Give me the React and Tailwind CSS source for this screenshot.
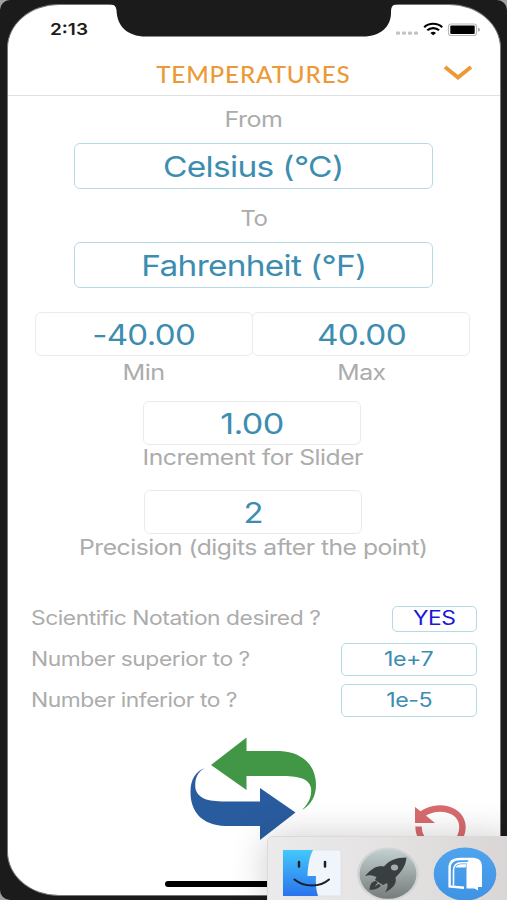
import React from "react";

function Stretch({ children, className = "" }) {
  return <span className={`inline-block whitespace-nowrap ${className}`}>{children}</span>;
}

function Caption({ children, className = "" }) {
  return (
    <div className="flex h-6 items-center justify-center text-[21px] leading-6 tracking-[-0.02em] text-[#acacac]">
      <Stretch className={className}>{children}</Stretch>
    </div>
  );
}

function UnitBox({ children, className = "" }) {
  return (
    <div className="flex h-[46px] w-[359px] items-center justify-center rounded-[6px] border-[1.5px] border-[#b5dae4] text-[29px] leading-none tracking-[-0.02em] text-[#3c8db0]">
      <Stretch className={className}>{children}</Stretch>
    </div>
  );
}

function NumberBox({ children, className = "" }) {
  return (
    <div className="flex h-[44px] w-[218px] shrink-0 items-center justify-center rounded-[6px] border-[1.5px] border-[#ebebeb] pt-[1px] text-[28px] leading-none tracking-[-0.02em] text-[#3c8db0]">
      <Stretch className={className}>{children}</Stretch>
    </div>
  );
}

function Row({ label, labelClass, value, valueClass, boxClass }) {
  return (
    <div className="flex h-[33px] items-center justify-between pl-[23px] pr-[23px]">
      <Stretch className={`origin-left text-[19.5px] leading-none tracking-[-0.02em] text-[#acacac] ${labelClass}`}>{label}</Stretch>
      <div className={`flex items-center justify-center rounded-[5px] border-[1.5px] border-[#b5dae4] text-[19.5px] leading-none tracking-[-0.02em] ${boxClass}`}>
        <Stretch className={valueClass}>{value}</Stretch>
      </div>
    </div>
  );
}

function StatusIcons() {
  return (
    <svg width="88" height="16" viewBox="0 0 88 16" className="block">
      <g fill="#c4c4c4">
        <rect x="1" y="9.500" width="4" height="3.200" rx="1" />
        <rect x="7" y="9.500" width="4" height="3.200" rx="1" />
        <rect x="13" y="9.500" width="4" height="3.200" rx="1" />
        <rect x="19" y="9.500" width="4" height="3.200" rx="1" />
      </g>
      <g fill="none" stroke="#000" strokeWidth="2.200">
        <path d="M29.200 5.200C34 .6 42.400 .6 47.200 5.200" />
        <path d="M32.300 8.300C35.500 5.300 40.900 5.300 44.100 8.300" />
      </g>
      <path d="M35.400 10.900Q38.200 8.700 41 10.900L38.200 13.200Z" fill="#000" />
      <rect x="53.500" y="2" width="28" height="11.500" rx="2.500" fill="#fff" stroke="#b9b9b9" strokeWidth="1.200" />
      <rect x="55.300" y="3.600" width="24.400" height="8.300" rx="1" fill="#000" />
      <path d="M83 5.700Q85 6.200 85 7.700Q85 9.200 83 9.800Z" fill="#aaa" />
    </svg>
  );
}

function Finder() {
  return (
    <svg width="60" height="48" viewBox="0 0 60 48" className="block">
      <defs>
        <linearGradient id="finderBlue" x1="0" y1="0" x2="0" y2="1">
          <stop offset="0" stopColor="#43c8fb" />
          <stop offset="1" stopColor="#2b73ed" />
        </linearGradient>
      </defs>
      <rect x="1" y="1" width="58" height="46" rx="2" fill="#f0f4fb" stroke="#dadfe6" strokeWidth=".8" />
      <path d="M1 1H31C27 9 26 17 25.500 27H34C33.500 34 34 41 36 47H1Z" fill="url(#finderBlue)" />
      <path d="M17 13V17.500M43 13V17.500" stroke="#15202f" strokeWidth="2.500" strokeLinecap="round" />
      <path d="M12.500 30.500C22 38.500 38 38.500 47 30.500" fill="none" stroke="#15202f" strokeWidth="2" strokeLinecap="round" />
    </svg>
  );
}

function Rocket() {
  return (
    <svg width="64" height="54" viewBox="0 0 64 54" className="block">
      <defs>
        <linearGradient id="rocketDisc" x1="0" y1="0" x2="0" y2="1">
          <stop offset="0" stopColor="#c2d0cf" />
          <stop offset="1" stopColor="#767c7b" />
        </linearGradient>
      </defs>
      <ellipse cx="32" cy="27" rx="31" ry="26.500" fill="#d0d6d5" />
      <ellipse cx="32" cy="27" rx="28.500" ry="24.800" fill="url(#rocketDisc)" />
      <path d="M50.500 10.500C40 10.500 33 13.500 28 19.500C22 18.500 17 20 9 29Q15 27 20.500 30L19 33L27 38L31 36C32.500 39 31 42 29 45.500C37 41 41 37 39.500 30.500C45.500 25 50 18 50.500 10.500Z" fill="#393e40" />
      <path d="M20 34C15 34.500 14 38 13.500 43C18 42.500 22 42.500 25 38.500L22.500 37L18.500 40L21.500 35.500Z" fill="#393e40" />
      <ellipse cx="38.500" cy="20.500" rx="3.600" ry="2.900" fill="#a2aead" />
    </svg>
  );
}

function Mailbox() {
  return (
    <svg width="64" height="54" viewBox="0 0 64 54" className="block">
      <defs>
        <linearGradient id="mailDisc" x1="0" y1="0" x2="0" y2="1">
          <stop offset="0" stopColor="#4fa3ee" />
          <stop offset="1" stopColor="#3f93e4" />
        </linearGradient>
      </defs>
      <ellipse cx="32" cy="27" rx="31.300" ry="26.500" fill="url(#mailDisc)" />
      <path d="M41 12H27C19.500 12 16.600 15.500 16.600 21V39.500L31 40.800" fill="none" stroke="#fff" strokeWidth="2.400" />
      <path d="M20.500 38.500V24C20.500 18.500 23.500 15.800 28.500 15.800H34.500" fill="none" stroke="#fff" strokeWidth="1.600" />
      <path d="M22.500 20.500C23.500 18 25.500 17.200 28 17.200H33.500L32.500 20.500Z" fill="#fff" />
      <path d="M33.500 41.500V20C33.500 14.500 36 11 41 11C46.500 11 49 14.500 49 20V40H45V43.500L41.500 41.500Z" fill="#fff" />
    </svg>
  );
}

function Dock() {
  return (
    <div className="absolute left-[267px] top-[836px] flex h-[70px] w-[250px] items-start rounded-tl-[5px] border border-[#dbd9d9] bg-gradient-to-r from-[#ebebeb] via-[#e4e1e1] to-[#d9d5d5] pl-[14px] pt-[10px] shadow-[0_0_36px_rgba(0,0,0,0.2)]">
      <div className="pt-[2px]"><Finder /></div>
      <div className="ml-[14px]"><Rocket /></div>
      <div className="ml-[13px]"><Mailbox /></div>
    </div>
  );
}

export default function App() {
  return (
    <div className="relative h-[900px] w-[507px] overflow-hidden bg-[#a0a0a0] font-['Inter','Liberation_Sans',sans-serif]">
      <div className="h-[900px] w-[507px] rounded-[10px] bg-[#1b1b1b] px-[7px] pt-[4px]">
        <div className="flex h-[892px] w-[494px] flex-col overflow-hidden rounded-[52px/44px] border border-[#777] bg-white">
          <div className="flex h-[49px] items-center justify-between pl-[42px] pr-[17px]">
            <Stretch className="origin-left scale-x-[1.150] text-[16.5px] font-semibold leading-none text-[#1c1c1c]">2:13</Stretch>
            <StatusIcons />
          </div>
          <div className="relative flex h-[42px] shrink-0 items-center justify-center border-b border-[#e0e0e0] pr-[2px]">
            <Stretch className="scale-x-[1.030] font-['Lato',sans-serif] text-[23.5px] font-medium leading-none tracking-[0.035em] text-[#ec9a37]">TEMPERATURES</Stretch>
            <svg width="30" height="18" viewBox="0 0 30 18" className="absolute right-[27px] top-[10px]">
              <path d="M2 3L15 13.500L28 3" fill="none" stroke="#ec9a37" strokeWidth="4" />
            </svg>
          </div>
          <div className="flex flex-col items-center pr-[1px] pt-[12px]">
            <Caption className="scale-x-[1.190]">From</Caption>
            <div className="mt-[11px]"><UnitBox className="scale-x-[1.155]">Celsius (°C)</UnitBox></div>
            <div className="mt-[18px]"><Caption className="scale-x-[1.150]">To</Caption></div>
            <div className="mt-[11px]"><UnitBox className="scale-x-[1.150]">Fahrenheit (°F)</UnitBox></div>
            <div className="mt-[24px] flex pr-[2px]">
              <div>
                <NumberBox className="scale-x-[1.180]">-40.00</NumberBox>
                <div className="mt-[5px]"><Caption className="scale-x-[1.200]">Min</Caption></div>
              </div>
              <div className="-ml-px">
                <NumberBox className="scale-x-[1.190]">40.00</NumberBox>
                <div className="mt-[5px]"><Caption className="scale-x-[1.180]">Max</Caption></div>
              </div>
            </div>
            <div className="mt-[16px] pr-[3px]"><NumberBox className="scale-x-[1.220]">1.00</NumberBox></div>
            <div className="mt-px pr-px"><Caption className="scale-x-[1.175]">Increment for Slider</Caption></div>
            <div className="mt-[20px] pr-px"><NumberBox className="scale-x-[1.170]">2</NumberBox></div>
            <div className="mt-[2px]"><Caption className="scale-x-[1.175]">Precision (digits after the point)</Caption></div>
          </div>
          <div className="mt-[42px] flex flex-col">
            <Row label="Scientific Notation desired ?" labelClass="scale-x-[1.170]" value="YES" valueClass="scale-x-[1.170]" boxClass="h-[26px] w-[85px] pt-[1px] text-[#1a18dc]" />
            <div className="mt-[8px]">
              <Row label="Number superior to ?" labelClass="scale-x-[1.170]" value="1e+7" valueClass="scale-x-[1.190]" boxClass="h-[33px] w-[136px] text-[#3c8db0]" />
            </div>
            <div className="mt-[8px]">
              <Row label="Number inferior to ?" labelClass="scale-x-[1.170]" value="1e-5" valueClass="scale-x-[1.190]" boxClass="h-[33px] w-[136px] text-[#3c8db0]" />
            </div>
          </div>
          <div className="mt-[19px] flex items-start pl-[180px]">
            <svg width="130" height="106" viewBox="188 736 130 106" className="block shrink-0">
              <path d="M211 765L246.500 737.500V751H280C302 752 316 765 316 785C316 796 311 805 302 810C309 803 312 796 311 788C309 778 298 776 280 776H246.500V790Z" fill="#419746" />
              <path d="M204.500 768C196 773 194.500 781 195.500 789C199 800 210 801.500 228 801.500H260V788L295.500 812.500L260 840V826H225C202 825 190.500 812 190.500 792C190.500 780 195 772 204.500 768Z" fill="#295c9f" />
            </svg>
            <svg width="56" height="52" viewBox="412 802 56 52" className="ml-[94px] mt-[66px] block shrink-0">
              <path d="M421 815C436 803 462 808 462.500 827C462 855 419 855 418.500 826.500" fill="none" stroke="#d86b6f" strokeWidth="6.500" />
              <path d="M415 807L421.500 812L435 823H415Z" fill="#d86b6f" />
            </svg>
          </div>
        </div>
      </div>
      <svg width="290" height="40" viewBox="109 0 290 40" className="absolute left-[109px] top-0">
        <path d="M109 0V4Q116 4 116.500 10C117 26 127 36.500 146 36.500H363C381 36.500 391 26 391 13C391 7 392 4 399 4V0Z" fill="#1b1b1b" />
      </svg>
      <div className="absolute left-[165px] top-[881px] h-[6px] w-[178px] rounded-full bg-black" />
      <Dock />
    </div>
  );
}
